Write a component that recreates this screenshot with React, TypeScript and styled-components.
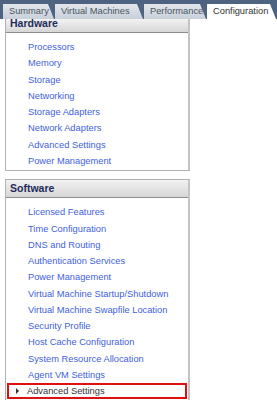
import React from "react";
import styled, { createGlobalStyle } from "styled-components";

const Global = createGlobalStyle`
  html, body { margin: 0; padding: 0; background: #ffffff; }
  body { font-family: "Liberation Sans", Arial, sans-serif; }
`;

const Page = styled.div`
  width: 277px;
  height: 400px;
  overflow: hidden;
  background: #fff;
  display: flex;
  flex-direction: column;
`;

const TabBar = styled.div`
  height: 19px;
  background: #4d6380;
  display: flex;
  align-items: flex-end;
  padding-left: 3px;
  gap: 1px;
  flex-shrink: 0;
`;

const Tab = styled.div<{ $active?: boolean; $w: number }>`
  width: ${(p) => p.$w}px;
  height: 15px;
  box-sizing: border-box;
  padding-left: 6px;
  background: ${(p) => (p.$active ? "#ffffff" : "linear-gradient(#e2e6ec, #c8d0da)")};
  color: ${(p) => (p.$active ? "#333" : "#4a5560")};
  font-size: 9.3px;
  line-height: 15px;
  white-space: nowrap;
  clip-path: polygon(0 0, calc(100% - 6px) 0, 100% 100%, 0 100%);
`;

const Content = styled.div`
  display: flex;
  flex-direction: column;
  gap: 8px;
  padding-left: 5px;
`;

const Panel = styled.div`
  width: 185px;
  box-sizing: border-box;
  border: 1px solid #b2b2b2;
  border-right: 2px solid #c4c4c4;
  background: #fff;
`;

const HardwarePanel = styled(Panel)`
  border-top: none;
`;

const Header = styled.div<{ $h: number }>`
  height: ${(p) => p.$h}px;
  box-sizing: border-box;
  border-bottom: 1px solid #8c8c8c;
  background: linear-gradient(#f2f2f2, #d6d6d6);
  color: #1e2b5c;
  font-weight: bold;
  font-size: 10.5px;
  padding-left: 4px;
  display: flex;
  align-items: flex-end;
  padding-bottom: 3px;
`;

const List = styled.div<{ $bottom: number }>`
  display: flex;
  flex-direction: column;
  padding: 6px 0 ${(p) => p.$bottom}px;
`;

const Item = styled.div<{ $selected?: boolean }>`
  height: 16.27px;
  line-height: 16px;
  font-size: 9.3px;
  box-sizing: border-box;
  padding-left: 22px;
  color: ${(p) => (p.$selected ? "#333333" : "#3f5fe0")};
  white-space: nowrap;
  position: relative;
  display: flex;
  align-items: center;
  ${(p) =>
    p.$selected
      ? `
    margin: 0 1px 0 1px;
    padding-left: 20px;
    outline: 2px solid #e01010;
    outline-offset: -2px;
    height: 16px;
    line-height: 14px;
  `
      : ""}
`;

const Arrow = styled.span`
  position: absolute;
  left: 9px;
  top: 5px;
  width: 0;
  height: 0;
  border-top: 3px solid transparent;
  border-bottom: 3px solid transparent;
  border-left: 3px solid #333;
`;

const hardware = [
  "Processors",
  "Memory",
  "Storage",
  "Networking",
  "Storage Adapters",
  "Network Adapters",
  "Advanced Settings",
  "Power Management",
];

const software = [
  "Licensed Features",
  "Time Configuration",
  "DNS and Routing",
  "Authentication Services",
  "Power Management",
  "Virtual Machine Startup/Shutdown",
  "Virtual Machine Swapfile Location",
  "Security Profile",
  "Host Cache Configuration",
  "System Resource Allocation",
  "Agent VM Settings",
];

export default function App() {
  return (
    <Page>
      <Global />
      <TabBar>
        <Tab $w={51}>Summary</Tab>
        <Tab $w={88}>Virtual Machines</Tab>
        <Tab $w={62}>Performance</Tab>
        <Tab $w={69} $active>
          Configuration
        </Tab>
      </TabBar>
      <Content>
        <HardwarePanel>
          <Header $h={14}>Hardware</Header>
          <List $bottom={1}>
            {hardware.map((h) => (
              <Item key={h}>{h}</Item>
            ))}
          </List>
        </HardwarePanel>
        <Panel>
          <Header $h={18}>Software</Header>
          <List $bottom={1}>
            {software.map((s) => (
              <Item key={s}>{s}</Item>
            ))}
            <Item $selected>
              <Arrow />
              Advanced Settings
            </Item>
          </List>
        </Panel>
      </Content>
    </Page>
  );
}
